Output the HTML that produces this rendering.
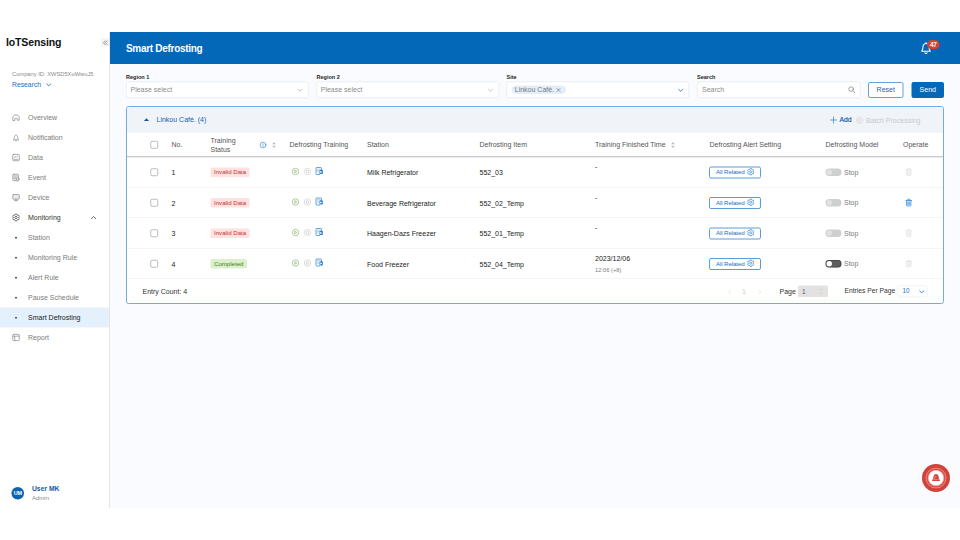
<!DOCTYPE html>
<html>
<head>
<meta charset="utf-8">
<title>Smart Defrosting</title>
<style>
*{box-sizing:border-box;margin:0;padding:0}
html,body{width:960px;height:540px;overflow:hidden;background:#fff}
body{font-family:"Liberation Sans",sans-serif;font-size:14px;color:#333}
#stage{position:absolute;left:0;top:0;width:1920px;height:1080px;transform:scale(.5);transform-origin:0 0;background:#fff}
#app{position:absolute;left:0;top:64px;width:1920px;height:952px;background:#fafbfe}
.abs{position:absolute}
svg{display:block;overflow:visible}
/* sidebar */
#side{position:absolute;left:0;top:0;width:220px;height:952px;background:#fff;border-right:2px solid #e6e6e6}
#logo{position:absolute;left:12px;top:6px;font-size:21px;letter-spacing:-.25px;font-weight:700;color:#111;line-height:28px;white-space:nowrap}
#collapse{position:absolute;left:202px;top:13px;width:16px;height:16px;background:#f3f3f3}
#cid{position:absolute;left:24px;top:77px;font-size:11.5px;color:#8a8a8a;line-height:14px;white-space:nowrap}
#research{position:absolute;left:24px;top:96px;font-size:13.6px;color:#1a6fc4;line-height:18px;white-space:nowrap}
.nav{position:absolute;left:0;width:218px;height:40px;line-height:40px;color:#7b7b7b;font-size:14px;white-space:nowrap}
.nav .t{position:absolute;left:56px;top:0}
.nav .ic{position:absolute;left:24px;top:12px;width:16px;height:16px}
.nav.dark{color:#333}
.nav.act{background:#e4f0fb;color:#222}
.nav .dot{position:absolute;left:30px;top:18.5px;width:3.5px;height:3.5px;background:#555}
#avatar{position:absolute;left:23px;top:910px;width:25px;height:25px;border-radius:50%;background:#0a64b4;color:#fff;font-size:11px;font-weight:700;line-height:25px;text-align:center;letter-spacing:-.5px}
#uname{position:absolute;left:64px;top:904px;font-size:13.5px;font-weight:700;color:#1557a8;line-height:18px;white-space:nowrap}
#urole{position:absolute;left:64px;top:924px;font-size:12px;color:#8a8a8a;line-height:16px}
/* header */
#hdr{position:absolute;left:220px;top:0;width:1700px;height:64px;background:#0468b8}
#title{position:absolute;left:32px;top:18px;font-size:20px;letter-spacing:-.6px;font-weight:700;color:#fff;line-height:28px;white-space:nowrap}
/* filters */
.lbl{position:absolute;top:82px;font-size:11px;font-weight:700;color:#222;line-height:14px;white-space:nowrap}
.sel{position:absolute;top:99px;height:33px;background:#fff;border:1px solid #dde1e6;border-radius:4px;line-height:29px;font-size:14px;color:#8c8c8c;padding-left:8px;white-space:nowrap}
.btn{position:absolute;top:100px;height:32px;border-radius:4px;font-size:14px;line-height:28px;text-align:center}
/* panel */
#panel{position:absolute;left:252px;top:148px;width:1636px;height:396px;border:2px solid #74abde;border-radius:5px;background:#fff;overflow:hidden}
#pin{position:absolute;left:0;top:1px;width:1632px;height:391px}
#ghead{position:absolute;left:0;top:-1px;width:1632px;height:52px;background:#f0f4f9}
#ghead>*{margin-top:1px}
#thead{position:absolute;left:0;top:51px;width:1632px;height:48px;border-bottom:2px solid #c9c9c9;box-shadow:0 1px 3px rgba(0,0,0,.18);color:#555}
.th{position:absolute;top:0;height:46px;line-height:46px;white-space:nowrap;font-size:14px}
.row{position:absolute;left:0;width:1632px;height:61px;border-bottom:1px solid #ebebeb}
.c{position:absolute;white-space:nowrap;font-size:14px;color:#222;line-height:20px}
.cb{position:absolute;left:47px;width:15px;height:15px;border:1.5px solid #7d7d7d;border-radius:3px;background:#fff}
.tag{position:absolute;left:167px;top:20.5px;height:19.5px;line-height:19px;padding:0 7px;font-size:12.2px;border-radius:3px}
.tag.bad{background:#ffe1e1;color:#c0352b}
.tag.ok{background:#dcf1cb;color:#3f7a1e}
.rel{position:absolute;left:1164px;top:18.5px;width:104px;height:24px;border:2px solid #5e9cd9;border-radius:4px;color:#1a6fc4;font-size:12.4px;letter-spacing:-.25px;line-height:19px;padding-left:12px;white-space:nowrap}
.sw{position:absolute;left:1397px;top:23px;width:32px;height:15px;border-radius:8px;background:#cfcfcf}
.sw i{position:absolute;left:2px;top:2px;width:11px;height:11px;border-radius:50%;background:#e2e2e2}
.sw.dk{background:#5e5e5e;box-shadow:inset 0 0 0 1.5px #444}
.sw.dk i{background:#fff}
.stop{position:absolute;left:1434px;top:20px;color:#7b7b7b;font-size:14px;line-height:20px}
</style>
</head>
<body>
<div id="stage">
<div id="app">

<div id="side">
  <div id="logo">IoTSensing</div>
  <div id="collapse"><svg class="abs" style="left:3.500px;top:3.500px;width:9px;height:9px" viewBox="0 0 9 9" fill="none" stroke="#7a7a7a" stroke-width="1.400" stroke-linecap="round" stroke-linejoin="round"><path d="M4.200 .8L.9 4.500l3.300 3.700M8.200 .8L4.900 4.500l3.300 3.700"/></svg></div>
  <div id="cid">Company ID: XWSD5XuWwuJ5</div>
  <div id="research">Research</div>
  <svg class="abs" style="left:92px;top:102px;width:11px;height:7.5px" viewBox="0 0 12 8" fill="none" stroke="#1a6fc4" stroke-width="1.8" stroke-linecap="round" stroke-linejoin="round"><path d="M1.500 2l4.500 4 4.500-4"/></svg>
  <div class="nav " style="top:151px"><svg class="ic" viewBox="0 0 16 16" fill="none" stroke="#8c8c8c" stroke-width="1.5" stroke-linejoin="round" stroke-linecap="round"><path d="M1.600 13.400V8.600C1.600 5 4.200 2.800 8 2.800s6.400 2.200 6.400 5.800v4.800h-4V11c0-1.200-1-2-2.400-2s-2.400.8-2.400 2v2.400z"/></svg><span class="t">Overview</span></div>
  <div class="nav " style="top:191px"><svg class="ic" viewBox="0 0 16 16" fill="none" stroke="#8c8c8c" stroke-width="1.5" stroke-linejoin="round" stroke-linecap="round"><path d="M3 12.200c1.300-1 1.700-2.600 1.700-4.700C4.700 5.100 6 3.300 8 3.300s3.300 1.800 3.300 4.200c0 2.100.4 3.700 1.700 4.700z"/><path d="M6.900 14.500h2.200"/></svg><span class="t">Notification</span></div>
  <div class="nav " style="top:231px"><svg class="ic" viewBox="0 0 16 16" fill="none" stroke="#8c8c8c" stroke-width="1.4" stroke-linejoin="round" stroke-linecap="round"><rect x="1.400" y="1.800" width="13.200" height="12.600" rx="1.600"/><path d="M4 8.800l2.200-2.600 2 1.600 3.600-3.400"/><path d="M3.600 11.800h8.800" stroke-width="1.300"/></svg><span class="t">Data</span></div>
  <div class="nav " style="top:271px"><svg class="ic" viewBox="0 0 16 16" fill="none" stroke="#8c8c8c" stroke-width="1.4" stroke-linejoin="round" stroke-linecap="round"><rect x="1.500" y="1.500" width="11.500" height="13" rx="2" fill="#f0f0f0"/><path d="M4.200 4.800h6M4.200 7.600h4M4.200 10.400h2.500" stroke-width="1.200"/><circle cx="11.200" cy="11.200" r="3" fill="#e2e2e2"/></svg><span class="t">Event</span></div>
  <div class="nav " style="top:311px"><svg class="ic" viewBox="0 0 16 16" fill="none" stroke="#8c8c8c" stroke-width="1.4" stroke-linejoin="round" stroke-linecap="round"><rect x="1.500" y="2" width="13" height="9.400" rx="1.200" fill="#ebebeb"/><path d="M4.600 14.400h6.800M8 11.600v2.600"/></svg><span class="t">Device</span></div>
  <div class="nav dark" style="top:351px"><svg class="ic" viewBox="0 0 16 16" fill="none" stroke="#444" stroke-width="1.500" stroke-linejoin="round"><path d="M6.54 1.15L9.46 1.15L9.84 2.71L11.66 3.76L13.20 3.32L14.66 5.84L13.50 6.95L13.50 9.05L14.66 10.16L13.20 12.68L11.66 12.24L9.84 13.29L9.46 14.85L6.54 14.85L6.16 13.29L4.34 12.24L2.80 12.68L1.34 10.16L2.50 9.05L2.50 6.95L1.34 5.84L2.80 3.32L4.34 3.76L6.16 2.71z"/><circle cx="8" cy="8" r="2.300"/></svg><span class="t">Monitoring</span><svg class="abs" style="left:181px;top:16px;width:12px;height:8px" viewBox="0 0 12 8" fill="none" stroke="#555" stroke-width="1.700" stroke-linecap="round" stroke-linejoin="round"><path d="M1.500 6.300l4.500-4.300 4.500 4.300"/></svg></div>
  <div class="nav " style="top:391px"><span class="dot"></span><span class="t">Station</span></div>
  <div class="nav " style="top:431px"><span class="dot"></span><span class="t">Monitoring Rule</span></div>
  <div class="nav " style="top:471px"><span class="dot"></span><span class="t">Alert Rule</span></div>
  <div class="nav " style="top:511px"><span class="dot"></span><span class="t">Pause Schedule</span></div>
  <div class="nav act" style="top:551px"><span class="dot"></span><span class="t">Smart Defrosting</span></div>
  <div class="nav " style="top:591px"><svg class="ic" viewBox="0 0 16 16" fill="none" stroke="#8c8c8c" stroke-width="1.4" stroke-linejoin="round" stroke-linecap="round"><rect x="1.500" y="1.800" width="13" height="12.400" rx="1.300"/><path d="M1.500 5.400h13M5.600 5.400v8.800"/></svg><span class="t">Report</span></div>
  <div id="avatar">UM</div>
  <div id="uname">User MK</div>
  <div id="urole">Admin</div>
</div>

<div id="hdr">
  <div id="title">Smart Defrosting</div>
  <svg class="abs" style="left:1621px;top:19px;width:22px;height:26px" viewBox="0 0 22 26" fill="none" stroke="#fff" stroke-width="2.100" stroke-linecap="round" stroke-linejoin="round"><path d="M3 19.600c-.6 0-.8-.6-.4-1 1.700-1.700 2.300-3.900 2.300-7.100C4.900 7 7.400 4 11 4s6.100 3 6.100 7.500c0 3.200.6 5.400 2.300 7.100.4.400.2 1-.4 1z"/><path d="M8.700 22.700c.5 1 1.300 1.400 2.300 1.400s1.800-.4 2.300-1.400M11 2v1.800"/></svg>
  <div class="abs" style="left:1634px;top:16px;width:25px;height:18px;border-radius:9px;background:#d6402f;color:#fff;font-size:13px;font-weight:700;line-height:18px;text-align:center;letter-spacing:-.5px">47</div>
</div>

<div class="lbl" style="left:252px">Region 1</div>
<div class="lbl" style="left:633px">Region 2</div>
<div class="lbl" style="left:1013px">Site</div>
<div class="lbl" style="left:1394px">Search</div>
<div class="sel" style="left:252px;width:365px">Please select<svg class="abs" style="left:342px;top:13px;width:10px;height:7px" viewBox="0 0 12 8" fill="none" stroke="#9a9a9a" stroke-width="1.5" stroke-linecap="round" stroke-linejoin="round"><path d="M1.500 2l4.500 4 4.500-4"/></svg></div>
<div class="sel" style="left:632.500px;width:365px">Please select<svg class="abs" style="left:342px;top:13px;width:10px;height:7px" viewBox="0 0 12 8" fill="none" stroke="#9a9a9a" stroke-width="1.5" stroke-linecap="round" stroke-linejoin="round"><path d="M1.500 2l4.500 4 4.500-4"/></svg></div>
<div class="sel" style="left:1012.500px;width:365px"><span class="abs" style="left:9px;top:7px;width:109px;height:17px;line-height:17px;border-radius:9px;background:#e4eefa;color:#777;font-size:14px;padding-left:7px">Linkou Caf&eacute;.<svg class="abs" style="left:90px;top:4.500px;width:8px;height:8px" viewBox="0 0 8 8" fill="none" stroke="#666" stroke-width="1.200" stroke-linecap="round"><path d="M.8.800l6.400 6.400M7.200.8L.8 7.200"/></svg></span><svg class="abs" style="left:342px;top:13px;width:11px;height:7.5px" viewBox="0 0 12 8" fill="none" stroke="#1a6fc4" stroke-width="1.8" stroke-linecap="round" stroke-linejoin="round"><path d="M1.500 2l4.500 4 4.500-4"/></svg></div>
<div class="sel" style="left:1394px;width:327px;padding-left:9px">Search<svg class="abs" style="left:301px;top:8px;width:15px;height:15px" viewBox="0 0 15 15" fill="none" stroke="#8c8c8c" stroke-width="1.600" stroke-linecap="round"><circle cx="6.200" cy="6.200" r="4.600"/><path d="M9.800 9.800l4 4"/></svg></div>
<div class="btn" style="left:1736px;width:71px;border:2px solid #66a1db;color:#1763b5;background:#fff;line-height:27px">Reset</div>
<div class="btn" style="left:1823px;width:65px;background:#0468b8;color:#fff;line-height:31px">Send</div>

<div id="panel"><div id="pin">
  <div id="ghead"><svg class="abs" style="left:33px;top:21px;width:12px;height:7px" viewBox="0 0 12 7"><path d="M6 .6L11.200 6.200H.8z" fill="#1457a8"/></svg><div class="abs" style="left:59px;top:14px;line-height:20px;font-size:14px;color:#1a5fae;white-space:nowrap">Linkou Caf&eacute;. (4)</div><svg class="abs" style="left:1406px;top:18px;width:14px;height:14px" viewBox="0 0 14 14" fill="none" stroke="#2f7fd0" stroke-width="1.400" stroke-linecap="round"><path d="M7 .8v12.400M.8 7h12.400"/></svg><div class="abs" style="left:1425px;top:15px;line-height:20px;font-size:13.600px;color:#1559a8;-webkit-text-stroke:.35px #1559a8;white-space:nowrap">Add</div><svg class="abs" style="left:1458px;top:18px;width:15px;height:15px" viewBox="0 0 16 16" fill="none" stroke="#d0d0d0" stroke-width="1.3" stroke-linejoin="round"><path d="M6.92 1.18L9.08 1.18L9.32 2.87L10.70 3.44L12.06 2.42L13.58 3.94L12.56 5.30L13.13 6.68L14.82 6.92L14.82 9.08L13.13 9.32L12.56 10.70L13.58 12.06L12.06 13.58L10.70 12.56L9.32 13.13L9.08 14.82L6.92 14.82L6.68 13.13L5.30 12.56L3.94 13.58L2.42 12.06L3.44 10.70L2.87 9.32L1.18 9.08L1.18 6.92L2.87 6.68L3.44 5.30L2.42 3.94L3.94 2.42L5.30 3.44L6.68 2.87z"/><circle cx="8" cy="8" r="2.300"/></svg><div class="abs" style="left:1478px;top:15px;line-height:20px;font-size:14px;color:#c9c9c9;white-space:nowrap">Batch Processing</div></div>
  <div id="thead"><span class="cb" style="top:16px"></span><div class="th" style="left:89px">No.</div><div class="th" style="left:167px;line-height:16.600px;top:7px">Training<br>Status</div><svg class="abs" style="left:265px;top:17px;width:14px;height:14px" viewBox="0 0 14 14" fill="none" stroke="#3b8ad6" stroke-width="1.300" stroke-linecap="round"><circle cx="7" cy="7" r="5.800"/><path d="M7 6.300v3.500M7 4.200v.2"/></svg><svg class="abs" style="left:290px;top:17px;width:8px;height:14px" viewBox="0 0 8 14"><path d="M4 1L7.600 5.600H.4zM4 13L7.600 8.400H.4z" fill="#bcbcbc"/></svg><div class="th" style="left:325px">Defrosting Training</div><div class="th" style="left:480px">Station</div><div class="th" style="left:705px">Defrosting Item</div><div class="th" style="left:936px">Training Finished Time</div><svg class="abs" style="left:1088px;top:17px;width:8px;height:14px" viewBox="0 0 8 14"><path d="M4 1L7.600 5.600H.4zM4 13L7.600 8.400H.4z" fill="#bcbcbc"/></svg><div class="th" style="left:1165px">Defrosting Alert Setting</div><div class="th" style="left:1397px">Defrosting Model</div><div class="th" style="left:1552px">Operate</div></div>
  <div class="row" style="top:99px"><span class="cb" style="top:23px"></span><div class="c" style="left:89px;top:21px">1</div><div class="tag bad">Invalid Data</div><svg class="abs" style="left:329px;top:20.500px;width:16px;height:16px" viewBox="0 0 16 16" fill="none" stroke="#93b57a" stroke-width="1.400" stroke-linejoin="round"><circle cx="8" cy="8" r="6.400"/><path d="M6.500 5.300v5.400L10.800 8z"/></svg><svg class="abs" style="left:353px;top:20.500px;width:16px;height:16px" viewBox="0 0 16 16" fill="none" stroke="#cecece" stroke-width="1.400" stroke-linejoin="round"><circle cx="8" cy="8" r="6.400"/><rect x="5.700" y="5.700" width="4.600" height="4.600"/></svg><svg class="abs" style="left:377px;top:20px;width:15px;height:16px" viewBox="0 0 15 16" fill="none" stroke="#3383d3" stroke-width="1.500" stroke-linejoin="round" stroke-linecap="round"><path d="M12 5V2.300c0-.8-.5-1.300-1.300-1.300H2.300C1.500 1 1 1.500 1 2.300v11.400c0 .8.500 1.300 1.300 1.300H8"/><path d="M3.600 4.200h5.800M3.600 7h3.200M3.600 9.800h2.600" stroke="#8dbdeb" stroke-width="1.300"/><rect x="8" y="5.600" width="6.600" height="8.600" rx="1.200" fill="#2b7bcd" stroke="none"/><path d="M9.500 7.500v4.800l3.800-2.400z" fill="#fff" stroke="none"/></svg><div class="c" style="left:480px;top:21px">Milk Refrigerator</div><div class="c" style="left:705px;top:21px">552_03</div><div class="c" style="left:936px;top:9px">-</div><div class="rel">All Related<svg class="abs" style="left:73.5px;top:1.5px;width:15px;height:15px" viewBox="0 0 16 16" fill="none" stroke="#2b7bcd" stroke-width="1.4" stroke-linejoin="round"><path d="M6.54 1.15L9.46 1.15L9.84 2.71L11.66 3.76L13.20 3.32L14.66 5.84L13.50 6.95L13.50 9.05L14.66 10.16L13.20 12.68L11.66 12.24L9.84 13.29L9.46 14.85L6.54 14.85L6.16 13.29L4.34 12.24L2.80 12.68L1.34 10.16L2.50 9.05L2.50 6.95L1.34 5.84L2.80 3.32L4.34 3.76L6.16 2.71z"/><circle cx="8" cy="8" r="2.300"/></svg></div><div class="sw"><i></i></div><div class="stop">Stop</div><svg class="abs" style="left:1557px;top:22px;width:13px;height:16px" viewBox="0 0 13 16" fill="none" stroke="#dcdcdc" stroke-width="1.400" stroke-linejoin="round" stroke-linecap="round"><path d="M1 3.800h11M4.600 3.600V1.800c0-.4.300-.7.700-.7h2.400c.4 0 .7.300.7.700v1.800M2.200 4v9.800c0 .7.400 1.100 1.100 1.100h6.400c.7 0 1.100-.4 1.100-1.100V4"/><path d="M4.600 6.800v5.400M6.500 6.800v5.400M8.400 6.800v5.400" stroke-width="1.100"/></svg></div>
  <div class="row" style="top:160px"><span class="cb" style="top:23px"></span><div class="c" style="left:89px;top:21px">2</div><div class="tag bad">Invalid Data</div><svg class="abs" style="left:329px;top:20.500px;width:16px;height:16px" viewBox="0 0 16 16" fill="none" stroke="#93b57a" stroke-width="1.400" stroke-linejoin="round"><circle cx="8" cy="8" r="6.400"/><path d="M6.500 5.300v5.400L10.800 8z"/></svg><svg class="abs" style="left:353px;top:20.500px;width:16px;height:16px" viewBox="0 0 16 16" fill="none" stroke="#cecece" stroke-width="1.400" stroke-linejoin="round"><circle cx="8" cy="8" r="6.400"/><rect x="5.700" y="5.700" width="4.600" height="4.600"/></svg><svg class="abs" style="left:377px;top:20px;width:15px;height:16px" viewBox="0 0 15 16" fill="none" stroke="#3383d3" stroke-width="1.500" stroke-linejoin="round" stroke-linecap="round"><path d="M12 5V2.300c0-.8-.5-1.300-1.300-1.300H2.300C1.500 1 1 1.500 1 2.300v11.400c0 .8.500 1.300 1.300 1.300H8"/><path d="M3.600 4.200h5.800M3.600 7h3.200M3.600 9.800h2.600" stroke="#8dbdeb" stroke-width="1.300"/><rect x="8" y="5.600" width="6.600" height="8.600" rx="1.200" fill="#2b7bcd" stroke="none"/><path d="M9.500 7.500v4.800l3.800-2.400z" fill="#fff" stroke="none"/></svg><div class="c" style="left:480px;top:21px">Beverage Refrigerator</div><div class="c" style="left:705px;top:21px">552_02_Temp</div><div class="c" style="left:936px;top:9px">-</div><div class="rel">All Related<svg class="abs" style="left:73.5px;top:1.5px;width:15px;height:15px" viewBox="0 0 16 16" fill="none" stroke="#2b7bcd" stroke-width="1.4" stroke-linejoin="round"><path d="M6.54 1.15L9.46 1.15L9.84 2.71L11.66 3.76L13.20 3.32L14.66 5.84L13.50 6.95L13.50 9.05L14.66 10.16L13.20 12.68L11.66 12.24L9.84 13.29L9.46 14.85L6.54 14.85L6.16 13.29L4.34 12.24L2.80 12.68L1.34 10.16L2.50 9.05L2.50 6.95L1.34 5.84L2.80 3.32L4.34 3.76L6.16 2.71z"/><circle cx="8" cy="8" r="2.300"/></svg></div><div class="sw"><i></i></div><div class="stop">Stop</div><svg class="abs" style="left:1557px;top:22px;width:13px;height:16px" viewBox="0 0 13 16" fill="none" stroke="#1a78d0" stroke-width="1.400" stroke-linejoin="round" stroke-linecap="round"><path d="M1 3.800h11M4.600 3.600V1.800c0-.4.300-.7.700-.7h2.400c.4 0 .7.300.7.700v1.800M2.200 4v9.800c0 .7.400 1.100 1.100 1.100h6.400c.7 0 1.100-.4 1.100-1.100V4"/><path d="M4.600 6.800v5.400M6.500 6.800v5.400M8.400 6.800v5.400" stroke-width="1.100"/></svg></div>
  <div class="row" style="top:221px"><span class="cb" style="top:23px"></span><div class="c" style="left:89px;top:21px">3</div><div class="tag bad">Invalid Data</div><svg class="abs" style="left:329px;top:20.500px;width:16px;height:16px" viewBox="0 0 16 16" fill="none" stroke="#93b57a" stroke-width="1.400" stroke-linejoin="round"><circle cx="8" cy="8" r="6.400"/><path d="M6.500 5.300v5.400L10.800 8z"/></svg><svg class="abs" style="left:353px;top:20.500px;width:16px;height:16px" viewBox="0 0 16 16" fill="none" stroke="#cecece" stroke-width="1.400" stroke-linejoin="round"><circle cx="8" cy="8" r="6.400"/><rect x="5.700" y="5.700" width="4.600" height="4.600"/></svg><svg class="abs" style="left:377px;top:20px;width:15px;height:16px" viewBox="0 0 15 16" fill="none" stroke="#3383d3" stroke-width="1.500" stroke-linejoin="round" stroke-linecap="round"><path d="M12 5V2.300c0-.8-.5-1.300-1.300-1.300H2.300C1.500 1 1 1.500 1 2.300v11.400c0 .8.500 1.300 1.300 1.300H8"/><path d="M3.600 4.200h5.800M3.600 7h3.200M3.600 9.800h2.600" stroke="#8dbdeb" stroke-width="1.300"/><rect x="8" y="5.600" width="6.600" height="8.600" rx="1.200" fill="#2b7bcd" stroke="none"/><path d="M9.500 7.500v4.800l3.800-2.400z" fill="#fff" stroke="none"/></svg><div class="c" style="left:480px;top:21px">Haagen-Dazs Freezer</div><div class="c" style="left:705px;top:21px">552_01_Temp</div><div class="c" style="left:936px;top:9px">-</div><div class="rel">All Related<svg class="abs" style="left:73.5px;top:1.5px;width:15px;height:15px" viewBox="0 0 16 16" fill="none" stroke="#2b7bcd" stroke-width="1.4" stroke-linejoin="round"><path d="M6.54 1.15L9.46 1.15L9.84 2.71L11.66 3.76L13.20 3.32L14.66 5.84L13.50 6.95L13.50 9.05L14.66 10.16L13.20 12.68L11.66 12.24L9.84 13.29L9.46 14.85L6.54 14.85L6.16 13.29L4.34 12.24L2.80 12.68L1.34 10.16L2.50 9.05L2.50 6.95L1.34 5.84L2.80 3.32L4.34 3.76L6.16 2.71z"/><circle cx="8" cy="8" r="2.300"/></svg></div><div class="sw"><i></i></div><div class="stop">Stop</div><svg class="abs" style="left:1557px;top:22px;width:13px;height:16px" viewBox="0 0 13 16" fill="none" stroke="#dcdcdc" stroke-width="1.400" stroke-linejoin="round" stroke-linecap="round"><path d="M1 3.800h11M4.600 3.600V1.800c0-.4.300-.7.700-.7h2.400c.4 0 .7.300.7.700v1.800M2.200 4v9.800c0 .7.400 1.100 1.100 1.100h6.400c.7 0 1.100-.4 1.100-1.100V4"/><path d="M4.600 6.800v5.400M6.500 6.800v5.400M8.400 6.800v5.400" stroke-width="1.100"/></svg></div>
  <div class="row" style="top:282px"><span class="cb" style="top:23px"></span><div class="c" style="left:89px;top:21px">4</div><div class="tag ok">Completed</div><svg class="abs" style="left:329px;top:20.500px;width:16px;height:16px" viewBox="0 0 16 16" fill="none" stroke="#93b57a" stroke-width="1.400" stroke-linejoin="round"><circle cx="8" cy="8" r="6.400"/><path d="M6.500 5.300v5.400L10.800 8z"/></svg><svg class="abs" style="left:353px;top:20.500px;width:16px;height:16px" viewBox="0 0 16 16" fill="none" stroke="#cecece" stroke-width="1.400" stroke-linejoin="round"><circle cx="8" cy="8" r="6.400"/><rect x="5.700" y="5.700" width="4.600" height="4.600"/></svg><svg class="abs" style="left:377px;top:20px;width:15px;height:16px" viewBox="0 0 15 16" fill="none" stroke="#3383d3" stroke-width="1.500" stroke-linejoin="round" stroke-linecap="round"><path d="M12 5V2.300c0-.8-.5-1.300-1.300-1.300H2.300C1.500 1 1 1.500 1 2.300v11.400c0 .8.500 1.300 1.300 1.300H8"/><path d="M3.600 4.200h5.800M3.600 7h3.200M3.600 9.800h2.600" stroke="#8dbdeb" stroke-width="1.300"/><rect x="8" y="5.600" width="6.600" height="8.600" rx="1.200" fill="#2b7bcd" stroke="none"/><path d="M9.500 7.500v4.800l3.800-2.400z" fill="#fff" stroke="none"/></svg><div class="c" style="left:480px;top:21px">Food Freezer</div><div class="c" style="left:705px;top:21px">552_04_Temp</div><div class="c" style="left:936px;top:9px">2023/12/06</div><div class="c" style="left:936px;top:32px;font-size:11.500px;color:#7b7b7b">12:06 (+8)</div><div class="rel">All Related<svg class="abs" style="left:73.5px;top:1.5px;width:15px;height:15px" viewBox="0 0 16 16" fill="none" stroke="#2b7bcd" stroke-width="1.4" stroke-linejoin="round"><path d="M6.54 1.15L9.46 1.15L9.84 2.71L11.66 3.76L13.20 3.32L14.66 5.84L13.50 6.95L13.50 9.05L14.66 10.16L13.20 12.68L11.66 12.24L9.84 13.29L9.46 14.85L6.54 14.85L6.16 13.29L4.34 12.24L2.80 12.68L1.34 10.16L2.50 9.05L2.50 6.95L1.34 5.84L2.80 3.32L4.34 3.76L6.16 2.71z"/><circle cx="8" cy="8" r="2.300"/></svg></div><div class="sw dk"><i></i></div><div class="stop">Stop</div><svg class="abs" style="left:1557px;top:22px;width:13px;height:16px" viewBox="0 0 13 16" fill="none" stroke="#dcdcdc" stroke-width="1.400" stroke-linejoin="round" stroke-linecap="round"><path d="M1 3.800h11M4.600 3.600V1.800c0-.4.300-.7.700-.7h2.400c.4 0 .7.300.7.700v1.800M2.200 4v9.800c0 .7.400 1.100 1.100 1.100h6.400c.7 0 1.100-.4 1.100-1.100V4"/><path d="M4.600 6.800v5.400M6.500 6.800v5.400M8.400 6.800v5.400" stroke-width="1.100"/></svg></div>
  <div class="c" style="left:31px;top:357px;color:#333">Entry Count: 4</div>
  <svg class="abs" style="left:1202px;top:364px;width:6px;height:9px" viewBox="0 0 8 12" fill="none" stroke="#d9d9d9" stroke-width="1.700" stroke-linecap="round" stroke-linejoin="round"><path d="M6 1.500L2 6l4 4.500"/></svg>
  <div class="c" style="left:1230px;top:357px;color:#cbcbcb">1</div>
  <svg class="abs" style="left:1263px;top:364px;width:6px;height:9px" viewBox="0 0 8 12" fill="none" stroke="#d9d9d9" stroke-width="1.700" stroke-linecap="round" stroke-linejoin="round"><path d="M2 1.500L6 6l-4 4.500"/></svg>
  <div class="c" style="left:1305px;top:357px;color:#333">Page</div>
  <div class="abs" style="left:1342px;top:356px;width:60px;height:23px;background:#e2e2e2;border-radius:3px;font-size:13px;line-height:23px;padding-left:8px;color:#555">1<svg class="abs" style="left:41px;top:4px;width:10px;height:16px" viewBox="0 0 10 16" fill="none" stroke="#cdcdcd" stroke-width="1.300" stroke-linecap="round" stroke-linejoin="round"><path d="M1.500 6L5 2.500 8.500 6M1.500 10L5 13.500 8.500 10"/></svg></div>
  <div class="c" style="left:1435px;top:357px;color:#333;font-size:13.400px">Entries Per Page</div>
  <div class="abs" style="left:1541px;top:356px;width:60px;height:23px;background:#fff;border:1px solid #e3e6ea;border-radius:4px;font-size:12.600px;line-height:21px;padding-left:9px;color:#1a6fc4">10<svg class="abs" style="left:42px;top:8px;width:11px;height:7.5px" viewBox="0 0 12 8" fill="none" stroke="#1a6fc4" stroke-width="1.8" stroke-linecap="round" stroke-linejoin="round"><path d="M1.500 2l4.500 4 4.500-4"/></svg></div>
</div></div>

<div class="abs" style="left:1844px;top:864px;width:56px;height:56px;border-radius:50%;background:#d2423b"></div>
<div class="abs" style="left:1851px;top:871px;width:42px;height:42px;border-radius:50%;border:2px solid #e88680;background:#d9524a"></div>
<div class="abs" style="left:1856px;top:876px;width:32px;height:32px;border-radius:50%;background:#fff;border:1.500px solid #f0a8a3"></div>
<svg class="abs" style="left:1862px;top:882px;width:20px;height:18px" viewBox="0 0 18 16"><path d="M3.600 11.500C3.600 5.500 5.600 1.800 9 1.800s5.400 3.700 5.400 9.700z" fill="#d6463e"/><rect x="1.600" y="11.500" width="14.800" height="3" rx="1.500" fill="#d6463e"/><path d="M8 5.500c-1 .8-1.500 2.200-1.600 4" stroke="#f3b1ad" stroke-width="1.200" fill="none" stroke-linecap="round"/></svg>

</div>
</div>
</body>
</html>
